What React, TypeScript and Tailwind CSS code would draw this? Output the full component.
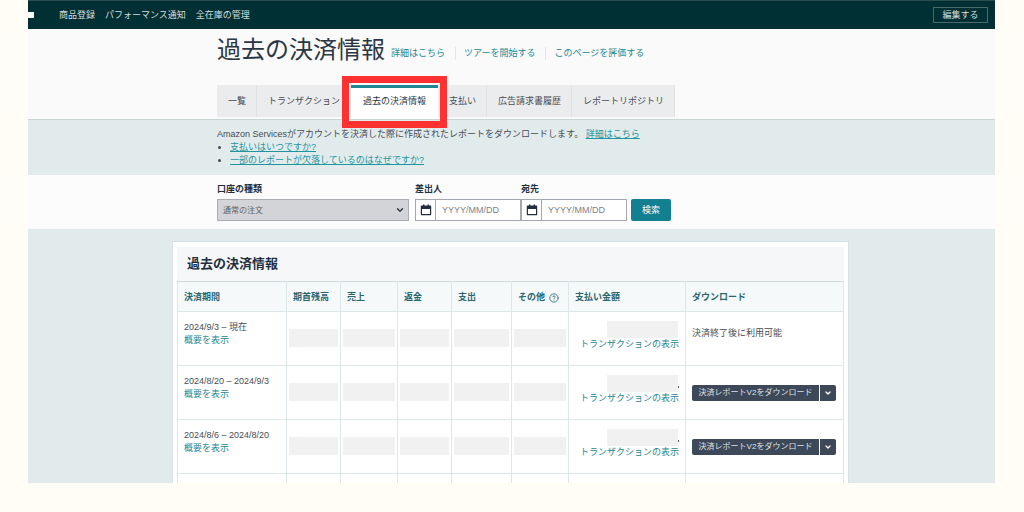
import React, { useState } from 'react';
import { ChevronDown, CircleQuestionMark } from 'lucide-react';

const navLinks = ['商品登録', 'パフォーマンス通知', '全在庫の管理'];
const titleLinks = ['詳細はこちら', 'ツアーを開始する', 'このページを評価する'];
const tabs = ['一覧', 'トランザクション', '過去の決済情報', '支払い', '広告請求書履歴', 'レポートリポジトリ'];
const columns = ['決済期間', '期首残高', '売上', '返金', '支出', 'その他', '支払い金額', 'ダウンロード'];

const rows = [
  { id: 1, period: '2024/9/3 – 現在', open: true },
  { id: 2, period: '2024/8/20 – 2024/9/3', open: false },
  { id: 3, period: '2024/8/6 – 2024/8/20', open: false },
];

const CalendarIcon: React.FC = () => (
  <svg viewBox="0 0 12 12" className="w-3 h-3" fill="#232f3e" aria-hidden="true">
    <path
      fillRule="evenodd"
      d="M3 .5h1.4v1h3.2v-1H9v1h1.200c.6 0 1 .4 1 1v7.800c0 .6-.4 1-1 1H1.800c-.6 0-1-.4-1-1V2.500c0-.6.4-1 1-1H3zM2 5v5.100h8V5z"
    />
  </svg>
);

const DateField: React.FC<{ id: string; label: string }> = ({ id, label }) => (
  <div>
    <label htmlFor={id} className="block font-bold leading-3 mb-1 text-[#232f3e]">{label}</label>
    <div className="flex h-[22px] w-[106px] border border-[#a3a8ae] bg-white">
      <span className="flex w-5 items-center justify-center border-r border-[#a3a8ae]">
        <CalendarIcon />
      </span>
      <input id={id} type="text" placeholder="YYYY/MM/DD" className="min-w-0 flex-1 px-1.5 placeholder:text-[#7d8288] outline-none" />
    </div>
  </div>
);

const App: React.FC = () => {
  const [activeTab, setActiveTab] = useState('過去の決済情報');

  return (
    <div className="flex h-screen flex-col bg-[#fffdf5] pl-7 pr-[29px] pb-[29px] font-['Liberation_Sans','Noto_Sans_CJK_JP',sans-serif] text-[9px] leading-[13px] text-[#454c53]">
      <div className="flex min-h-0 flex-1 flex-col overflow-hidden bg-[#e2ebec]">
        {/* Top navigation */}
        <nav className="flex h-[29px] shrink-0 items-center border-t border-[#2b4f50] bg-[#002f34] pr-[7px] text-[#d5dfdf]">
          <svg viewBox="0 0 6 6" className="h-1.5 w-1.5" fill="#fff" aria-hidden="true">
            <path d="M0 0h6v6H0z" />
          </svg>
          <div className="ml-[25px] flex flex-1 gap-2.5">
            {navLinks.map(link => (
              <a key={link} href="#">{link}</a>
            ))}
          </div>
          <button className="h-4 w-[55px] border border-[#49696c] leading-3">編集する</button>
        </nav>

        {/* Page header */}
        <header className="shrink-0 border-b border-[#cbd5d6] bg-[#fafafa] pl-[189px]">
          <div className="flex h-14 items-center pb-3.5">
            <h1 className="text-2xl leading-10 text-[#2b3745]">過去の決済情報</h1>
            <div className="ml-1.5 mt-1.5 flex text-[#248791]">
              {titleLinks.map((link, index) => (
                <a
                  key={link}
                  href="#"
                  className={index === 0 ? 'pr-2.5' : 'border-l border-[#e4e6e7] pl-2 pr-2.5'}
                >
                  {link}
                </a>
              ))}
            </div>
          </div>
          <div className="flex h-[34px]">
            {tabs.map(tab =>
              tab === activeTab ? (
                <div key={tab} className="relative flex">
                  <button className="border-t-3 border-[#1f8693] bg-white px-3 pb-1 text-[#2b3745]">{tab}</button>
                  <span className="pointer-events-none absolute -inset-[9px] z-10 border-7 border-[#ff3131]" />
                </div>
              ) : (
                <button
                  key={tab}
                  onClick={() => setActiveTab(tab)}
                  className="mb-0.5 border-r border-[#dfe1e3] bg-[#ebecee] pl-[11px] pr-2.5"
                >
                  {tab}
                </button>
              )
            )}
          </div>
        </header>

        {/* Description */}
        <section className="h-[55px] shrink-0 pl-[189px] pt-2">
          <p>
            Amazon Servicesがアカウントを決済した際に作成されたレポートをダウンロードします。{' '}
            <a href="#" className="text-[#1f95a0] underline">詳細はこちら</a>
          </p>
          <ul className="list-disc pl-[13px]">
            <li><a href="#" className="text-[#1f95a0] underline">支払いはいつですか?</a></li>
            <li><a href="#" className="text-[#1f95a0] underline">一部のレポートが欠落しているのはなぜですか?</a></li>
          </ul>
        </section>

        {/* Filters */}
        <form className="flex h-[54px] shrink-0 items-start bg-[#fcfcfc] pl-[189px] pt-2" onSubmit={e => e.preventDefault()}>
          <div className="mr-1.5">
            <label htmlFor="account" className="block font-bold leading-3 mb-1 text-[#232f3e]">口座の種類</label>
            <div className="relative">
              <select id="account" className="h-[22px] w-48 appearance-none border border-[#a9acb0] bg-[#d3d4d7] px-[5px] text-[8px] text-[#5c6168]">
                <option>通常の注文</option>
              </select>
              <ChevronDown className="pointer-events-none absolute right-1 top-1.5 h-2.5 w-2.5 text-[#333b44]" strokeWidth={3.5} />
            </div>
          </div>
          <DateField id="from" label="差出人" />
          <DateField id="to" label="宛先" />
          <button type="submit" className="ml-1 mt-4 h-[22px] w-10 rounded-xs bg-[#128091] text-white">検索</button>
        </form>

        {/* Settlements */}
        <main className="ml-36 mr-[146px] mt-3 border border-[#d7e0e2] bg-white px-1 pt-[5px]">
          <h2 className="bg-[#f6f7f9] pl-2.5 text-[13px] font-bold leading-[34px] text-[#232f3e]">過去の決済情報</h2>
          <table className="w-full table-fixed border-collapse">
            <colgroup>
              <col className="w-[109px]" />
              <col className="w-[54px]" />
              <col className="w-[57px]" />
              <col className="w-[54px]" />
              <col className="w-[60px]" />
              <col className="w-[57px]" />
              <col className="w-[117px]" />
              <col />
            </colgroup>
            <thead>
              <tr className="h-[30px] bg-[#f6f9fa] text-[#2a666f]">
                {columns.map(column => (
                  <th key={column} className="border border-[#dde6e8] border-t-[#cfdadd] px-1.5 pt-0.5 text-left font-bold whitespace-nowrap">
                    {column === 'その他' ? (
                      <span className="flex items-center gap-1">
                        {column}
                        <CircleQuestionMark className="h-2.5 w-2.5" />
                      </span>
                    ) : (
                      column
                    )}
                  </th>
                ))}
              </tr>
            </thead>
            <tbody>
              {rows.map(row => (
                <tr key={row.id} className="h-[54px] align-top">
                  <td className="border border-[#dde6e8] px-1.5 pt-[9px]">
                    <p>{row.period}</p>
                    <a href="#" className="text-[#248791]">概要を表示</a>
                  </td>
                  {columns.slice(1, 6).map(column => (
                    <td key={column} className="border border-[#dde6e8] px-0.5 pt-[17px]">
                      <div className="h-[18px] bg-[#f1f1f1]" />
                    </td>
                  ))}
                  <td className="border border-[#dde6e8] pl-1 pr-1.5 pt-[9px]">
                    <div className="flex items-end justify-end">
                      <div className="h-[17px] w-[71px] bg-[#f1f1f1]" />
                      <span className={row.open ? 'h-0.5 w-px' : 'mb-1 h-0.5 w-px bg-[#5c6168]'} />
                    </div>
                    <a href="#" className="block whitespace-nowrap text-right text-[#248791]">トランザクションの表示</a>
                  </td>
                  <td className="border border-[#dde6e8] px-1.5">
                    {row.open ? (
                      <p className="pt-[15px]">決済終了後に利用可能</p>
                    ) : (
                      <div className="flex gap-px pt-[19px] text-[8px]">
                        <button className="h-4 w-[127px] rounded-l-xs bg-[#3d4858] leading-4 text-[#dfe3e8]">
                          決済レポートV2をダウンロード
                        </button>
                        <button aria-label="メニュー" className="flex h-4 w-4 items-center justify-center rounded-r-xs bg-[#3d4858] text-white">
                          <ChevronDown className="h-2 w-2" strokeWidth={4} />
                        </button>
                      </div>
                    )}
                  </td>
                </tr>
              ))}
              <tr className="h-[54px]">
                {columns.map(column => (
                  <td key={column} className="border border-[#dde6e8]" />
                ))}
              </tr>
            </tbody>
          </table>
        </main>
      </div>
    </div>
  );
};

export default App;
